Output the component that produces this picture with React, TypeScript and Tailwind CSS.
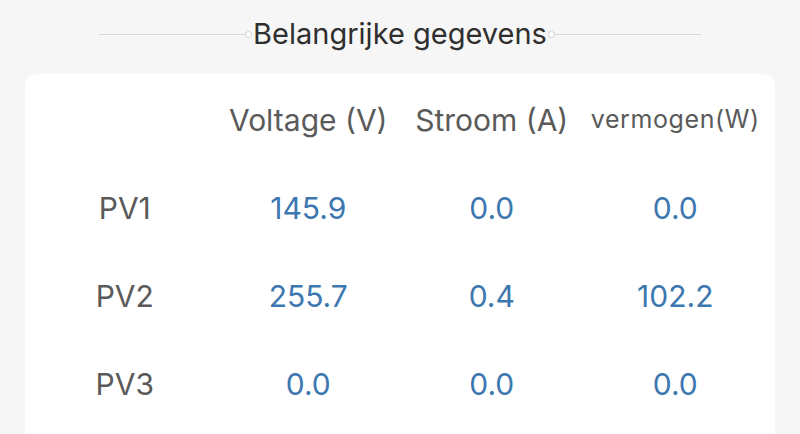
const headers = ['Voltage (V)', 'Stroom (A)', 'vermogen(W)'];

const rows = [
  { name: 'PV1', values: ['145.9', '0.0', '0.0'] },
  { name: 'PV2', values: ['255.7', '0.4', '102.2'] },
  { name: 'PV3', values: ['0.0', '0.0', '0.0'] },
];

function Rule() {
  return <div className="h-px w-[146px] bg-[#d6d6d6]" />;
}

function Dot() {
  return <div className="h-[7px] w-[7px] rounded-full border border-[#cfcfcf] bg-white" />;
}

export default function App() {
  return (
    <div
      className="h-[434px] w-[800px] overflow-hidden bg-[#f6f6f6]"
      style={{ fontFamily: 'Inter, Roboto, "Noto Sans", sans-serif' }}
    >
      {/* Title */}
      <div className="flex h-[68px] items-center justify-center">
        <Rule />
        <Dot />
        <h1 className="px-[1px] text-[29px] font-normal text-[#2f2f2f]">Belangrijke gegevens</h1>
        <Dot />
        <Rule />
      </div>

      {/* Card */}
      <div className="mx-[25px] mt-[6px] rounded-xl bg-white px-2 pt-[2px] pb-6">
        <div className="grid h-[88px] grid-cols-4 items-center text-center text-[#5a5a5a]">
          <div />
          {headers.map((h, i) => (
            <div key={h} className={i === 2 ? 'text-[25px] tracking-[0.6px]' : 'text-[30px]'}>
              {h}
            </div>
          ))}
        </div>
        {rows.map((r) => (
          <div key={r.name} className="grid h-[88px] grid-cols-4 items-center text-center text-[30px]">
            <div className="text-[#5a5a5a]">{r.name}</div>
            {r.values.map((v, i) => (
              <div key={i} className="text-[#3d77b0]">
                {v}
              </div>
            ))}
          </div>
        ))}
      </div>
    </div>
  );
}
